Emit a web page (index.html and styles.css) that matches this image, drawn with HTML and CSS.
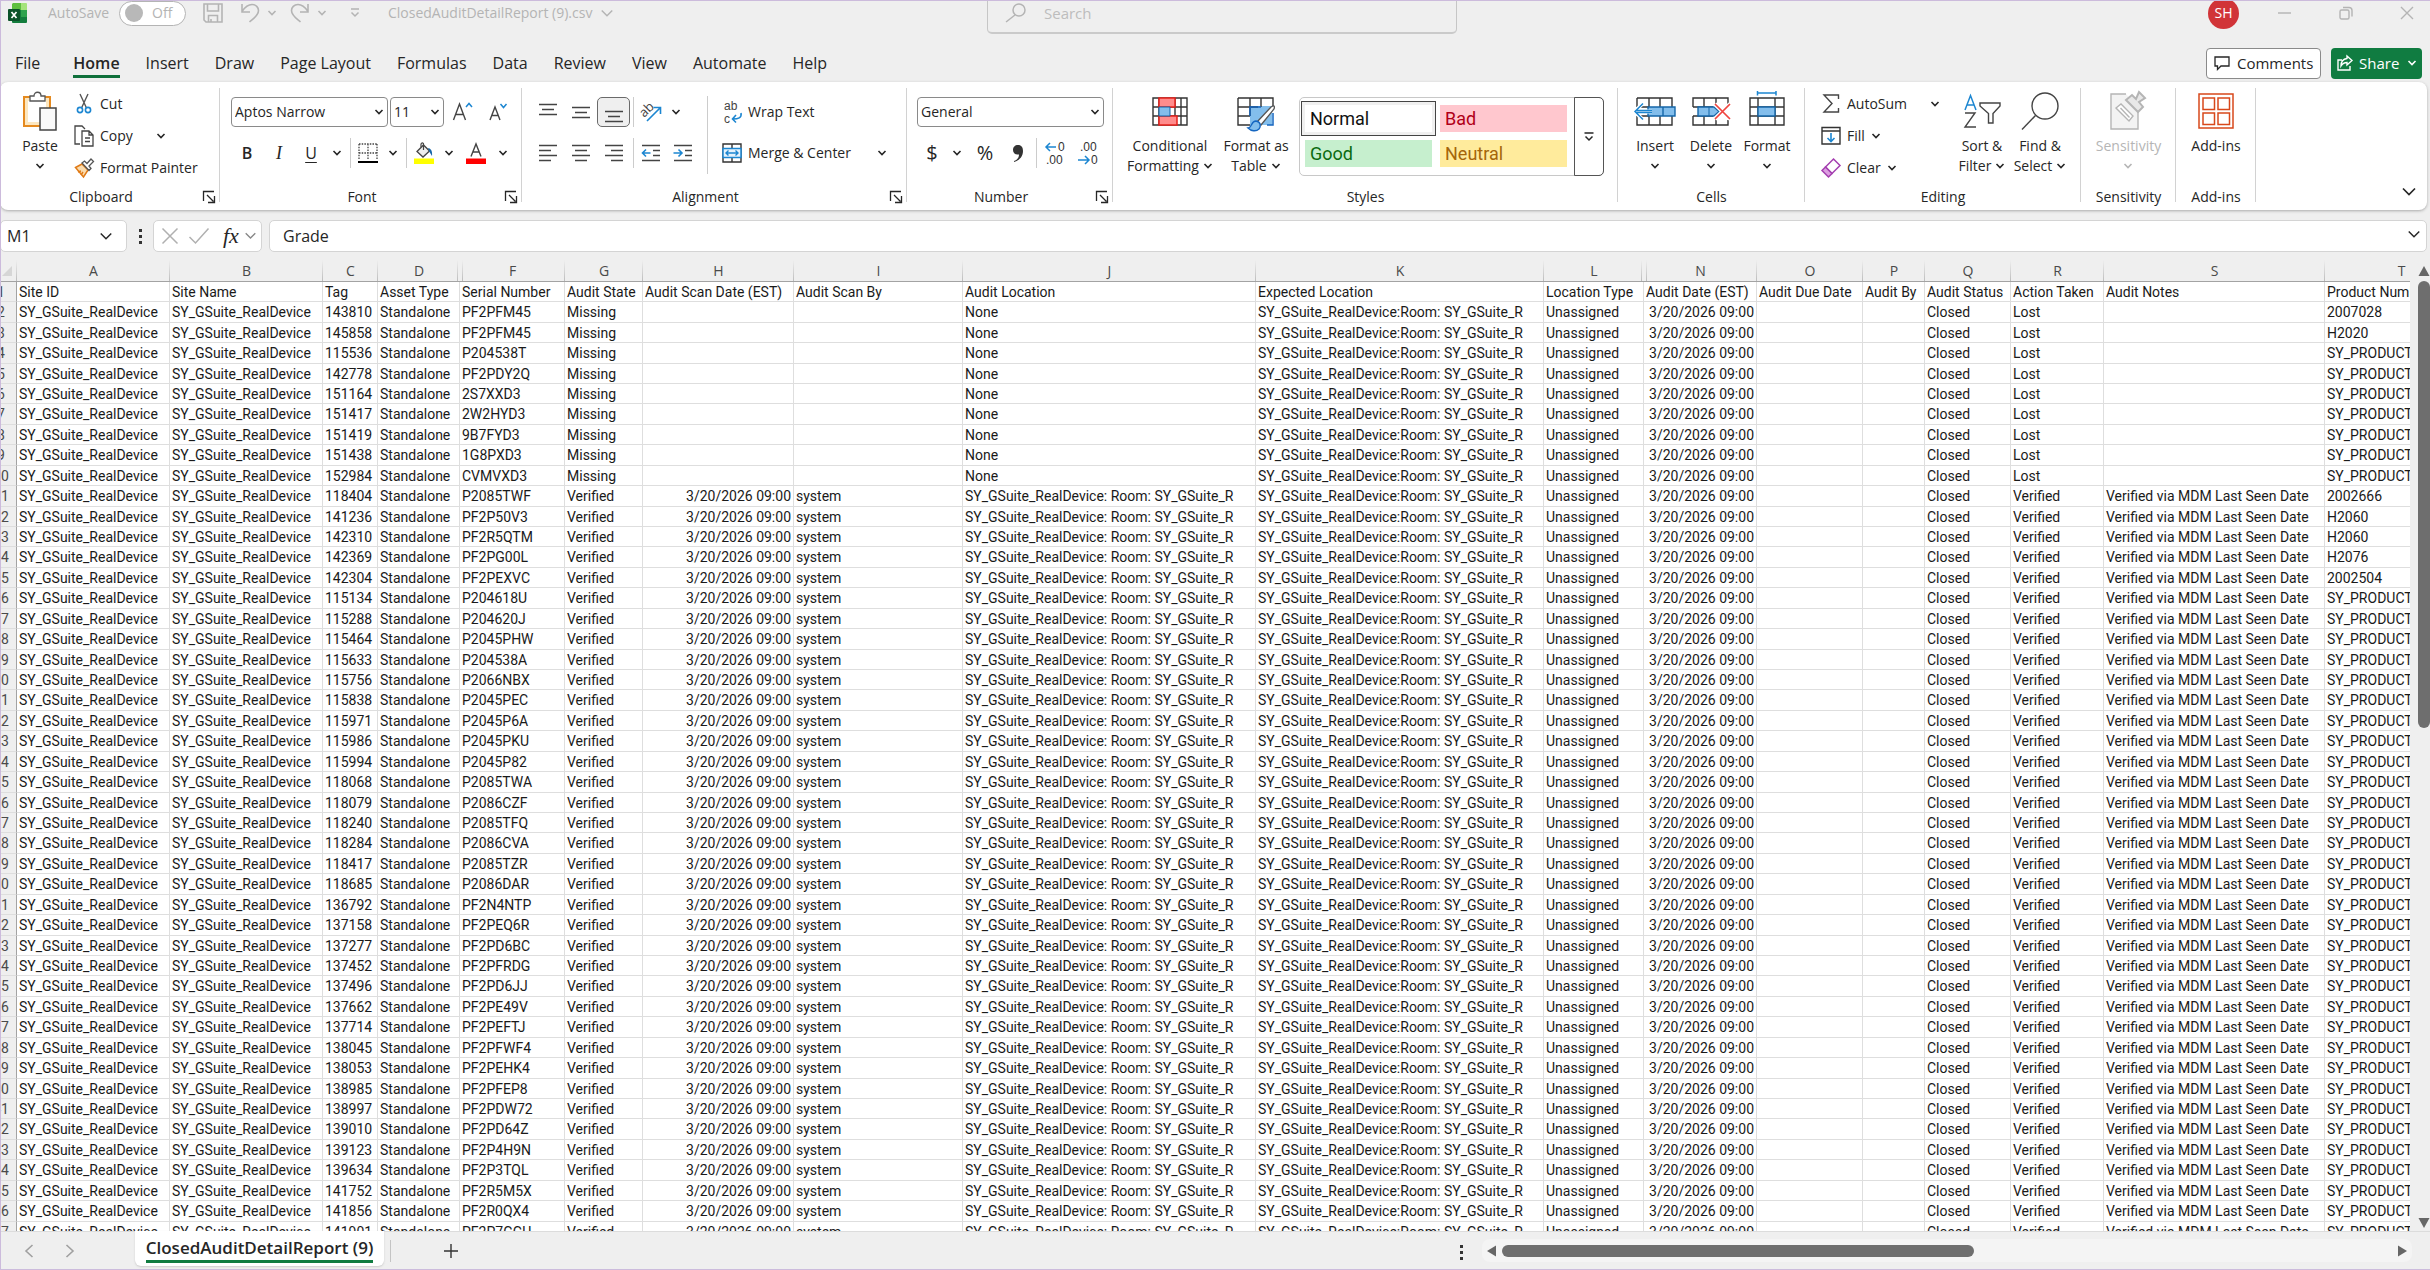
FILE: index.html
```html
<!DOCTYPE html>
<html lang="en">
<head>
<meta charset="utf-8">
<title>ClosedAuditDetailReport (9).csv</title>
<link rel="stylesheet" href="styles.css">
</head>
<body>
<svg class="sprite" aria-hidden="true">
  <symbol id="chev" viewBox="0 0 10 6"><path d="M1.500 1l3.500 3.500L8.500 1" fill="none" stroke="currentColor" stroke-width="1.600"/></symbol>
  <symbol id="chev-lg" viewBox="0 0 16 10"><path d="M2 1.500l6 6 6-6" fill="none" stroke="currentColor" stroke-width="1.700"/></symbol>
  <symbol id="launch" viewBox="0 0 14 14"><path d="M1.500 11V1.500H12M5 5l6.500 6.500M12.500 6v6.500H6" fill="none" stroke="currentColor" stroke-width="1.300"/></symbol>
</svg>

<header class="titlebar">
  <div class="title-left">
    <svg class="app-icon" width="20" height="22" viewBox="0 0 20 22"><path d="M5 1h8v7H4V2z" fill="#5ebf3f"/><path d="M13 1h5a1 1 0 0 1 1 1v6h-6z" fill="#a5e37b"/><path d="M4 8h15v12a1 1 0 0 1-1 1H5a1 1 0 0 1-1-1z" fill="#137d3d"/><path d="M13 8h6v7h-6z" fill="#2fa34e"/><rect y="7" width="12" height="12" rx="1" fill="#0b5229"/><path d="M3.500 10l5 6M8.500 10l-5 6" stroke="#fff" stroke-width="1.700"/></svg>
    <label class="autosave" for="autosave">AutoSave</label>
    <span class="toggle"><input type="checkbox" id="autosave"><span class="toggle-text">Off</span></span>
    <button class="tb save" aria-label="Save"><svg width="20" height="20" viewBox="0 0 20 20" fill="none" stroke="currentColor" stroke-width="1.600"><path d="M1 1h18v18H3l-2-2zM4.500 1v7h11V1M5.500 19v-6.500h9V19M8 16v3"/></svg></button>
    <button class="tb" aria-label="Undo"><svg width="20" height="20" viewBox="0 0 20 20" fill="none" stroke="currentColor" stroke-width="1.600"><path d="M2 1v8h8M2 8.500C5 4 8 1.500 12 1.500c4 0 6.500 3 6.500 6 0 5-5 8-9 11.500"/></svg></button>
    <svg class="c" width="10" height="6"><use href="#chev"/></svg>
    <button class="tb redo" aria-label="Redo"><svg width="20" height="20" viewBox="0 0 20 20" fill="none" stroke="currentColor" stroke-width="1.600"><path d="M18 1v8h-8M18 8.500C15 4 12 1.500 8 1.500c-4 0-6.500 3-6.500 6 0 5 5 8 9 11.500"/></svg></button>
    <svg class="c" width="10" height="6"><use href="#chev"/></svg>
    <button class="tb more" aria-label="Customize toolbar"><svg width="10" height="10" viewBox="0 0 10 10" fill="none" stroke="currentColor" stroke-width="1.500"><path d="M1 1h8M1.500 4.500L5 8l3.500-3.500"/></svg></button>
    <button class="filename">ClosedAuditDetailReport (9).csv <svg width="14" height="9"><use href="#chev-lg"/></svg></button>
  </div>
  <label class="search">
    <svg width="24" height="20" viewBox="0 0 24 20" fill="none" stroke="currentColor" stroke-width="1.500"><circle cx="15" cy="7" r="6"/><path d="M11 12l-9 7"/></svg>
    <input type="text" placeholder="Search" aria-label="Search">
  </label>
  <div class="title-right">
    <button class="avatar">SH</button>
    <button class="win" aria-label="Minimize"><svg width="14" height="14" fill="none" stroke="currentColor" stroke-width="1.400"><path d="M0 7h13"/></svg></button>
    <button class="win" aria-label="Restore"><svg width="14" height="14" fill="none" stroke="currentColor" stroke-width="1.400"><rect x="1" y="4" width="9" height="9" rx="1.500"/><path d="M4 1.500h6a3 3 0 0 1 3 3v6"/></svg></button>
    <button class="win" aria-label="Close"><svg width="14" height="14" fill="none" stroke="currentColor" stroke-width="1.400"><path d="M1 1l12 12M13 1L1 13"/></svg></button>
  </div>
</header>

<nav class="tabs">
  <a class="file" href="#">File</a><a class="active" href="#">Home</a><a href="#">Insert</a><a href="#">Draw</a><a href="#">Page Layout</a><a href="#">Formulas</a><a href="#">Data</a><a href="#">Review</a><a href="#">View</a><a href="#">Automate</a><a href="#">Help</a>
  <div class="tab-actions">
    <button class="comments"><svg width="16" height="15" viewBox="0 0 16 15" fill="none" stroke="currentColor" stroke-width="1.300"><path d="M1 1h14v9H7l-3.500 3.500V10H1z"/></svg>Comments</button>
    <button class="share"><svg width="16" height="16" viewBox="0 0 16 16" fill="none" stroke="currentColor" stroke-width="1.400"><path d="M5 5H1v10h12v-4M10 1l5 4.500L10 10V7.500c-3 0-4.500 1-6 3.500 0-4 2-7 6-7.500z"/></svg>Share<svg width="10" height="6"><use href="#chev"/></svg></button>
  </div>
</nav>

<section class="ribbon">
  <div class="group clipboard">
    <div class="body">
      <button class="big"><span class="ic"><svg width="36" height="40" viewBox="0 0 36 40"><path d="M2 6h26v29H2z" fill="#fce7c0" stroke="#e58a1f" stroke-width="2"/><path d="M6 10h18v21H6z" fill="#fff"/><path d="M8 10V5h4c0-5 7-5 7 0h4v5z" fill="#fff" stroke="#555" stroke-width="1.300"/><path d="M18 17h16v22H18z" fill="#fafafa" stroke="#444" stroke-width="1.500"/></svg></span>Paste<span class="l2"><svg width="10" height="6"><use href="#chev"/></svg></span></button>
      <div class="stack">
        <button class="small"><svg width="20" height="22" viewBox="0 0 20 22" fill="none"><path d="M6 1l6.500 14M14 1L7.500 15" stroke="#555" stroke-width="1.400"/><circle cx="6" cy="17" r="2.600" stroke="#1c86d1" stroke-width="1.600"/><circle cx="14" cy="17" r="2.600" stroke="#1c86d1" stroke-width="1.600"/></svg>Cut</button>
        <button class="small copy"><svg width="20" height="22" viewBox="0 0 20 22" fill="none" stroke="#444" stroke-width="1.300"><path d="M6 19H1V1h7l3 3"/><path d="M8 6h7l4 4v11H8zM15 6v4h4M11 13h5M11 16.500h5"/></svg>Copy<svg class="end" width="10" height="6"><use href="#chev"/></svg></button>
        <button class="small"><svg width="20" height="20" viewBox="0 0 20 20"><path d="M1.500 9.500L8 6l6 6-4.500 7z" fill="#fbdcae" stroke="#e07a16" stroke-width="1.500"/><path d="M4 14l3-1M7 17l2-3" stroke="#e07a16" stroke-width="1.400"/><path d="M8 5l2.500-2 2.500 2.500L17 1l2.500 2.500L15 8l2 2.500-2 2z" fill="#fff" stroke="#555" stroke-width="1.300"/></svg>Format Painter</button>
      </div>
    </div>
    <footer><span>Clipboard</span><button aria-label="Clipboard settings"><svg width="14" height="14"><use href="#launch"/></svg></button></footer>
  </div>

  <div class="group font">
    <div class="body"><div class="rows">
      <div class="row">
        <span class="combo w-font"><select aria-label="Font"><option>Aptos Narrow</option></select><svg width="10" height="6"><use href="#chev"/></svg></span>
        <span class="combo w-size"><select aria-label="Font size"><option>11</option></select><svg width="10" height="6"><use href="#chev"/></svg></span>
        <button class="t w34" aria-label="Increase font size"><svg width="22" height="22" viewBox="0 0 22 22" fill="none"><path d="M1.500 19L7.500 3l6 16M3.500 13.500h8" stroke="#444" stroke-width="1.400"/><path d="M14 6l3-3.500L20 6" stroke="#1c86d1" stroke-width="1.500"/></svg></button>
        <button class="t w32" aria-label="Decrease font size"><svg width="20" height="22" viewBox="0 0 20 22" fill="none"><path d="M2 19L7 6l5 13M4 14.500h6" stroke="#444" stroke-width="1.400"/><path d="M12.500 3l3 3.500L18.500 3" stroke="#1c86d1" stroke-width="1.500"/></svg></button>
      </div>
      <div class="row r2">
        <button class="t w32 b">B</button><button class="t w32 i">I</button><button class="t w32 u">U</button><button class="t w20" aria-label="Underline options"><svg width="10" height="6"><use href="#chev"/></svg></button>
        <i class="sep"></i>
        <button class="t w30" aria-label="Borders"><svg width="20" height="20" viewBox="0 0 20 20" fill="none" stroke="#444" stroke-width="1.300"><path d="M1 1h18M1 10h18M1 1v16M10 1v16M19 1v16" stroke-dasharray="1.500 1.200"/><path d="M0 19h20" stroke="#000" stroke-width="2"/></svg></button><button class="t w20" aria-label="Border options"><svg width="10" height="6"><use href="#chev"/></svg></button>
        <i class="sep"></i>
        <button class="t w30" aria-label="Fill color"><svg width="20" height="22" viewBox="0 0 20 22" fill="none"><path d="M3 9.500L9.500 3l6 6L9 15z" fill="#eee" stroke="#444" stroke-width="1.300"/><path d="M9.500 8V2c0-1.500-2.500-1.500-2.500.5V5" stroke="#444" stroke-width="1.200"/><path d="M14 6c3 .5 4.500 3 4 8l-2.500-4z" fill="#1566a8"/><path d="M0 16.500h20V22H0z" fill="#ff0"/></svg></button><button class="t w20" aria-label="Fill options"><svg width="10" height="6"><use href="#chev"/></svg></button>
        <button class="t w34" aria-label="Font color"><svg width="20" height="22" viewBox="0 0 20 22" fill="none"><path d="M5 14.500L10 2l5 12.500M7 10h6" stroke="#444" stroke-width="1.400"/><path d="M0 16.500h20V22H0z" fill="#f00"/></svg></button><button class="t w20" aria-label="Font color options"><svg width="10" height="6"><use href="#chev"/></svg></button>
      </div>
    </div></div>
    <footer><span>Font</span><button aria-label="Font settings"><svg width="14" height="14"><use href="#launch"/></svg></button></footer>
  </div>

  <div class="group align">
    <div class="body">
      <div class="rows">
        <div class="row">
          <button class="t w33" aria-label="Top align"><svg class="ln" width="20" height="22"><path d="M1 3.500h18M4 8.500h12M1 13.500h18"/></svg></button>
          <button class="t w33" aria-label="Middle align"><svg class="ln" width="20" height="22"><path d="M1 6.500h18M4 11.500h12M1 16.500h18"/></svg></button>
          <button class="t w33 on" aria-label="Bottom align"><svg class="ln" width="20" height="22"><path d="M1 10.500h18M4 15.500h12M1 20.500h18"/></svg></button>
          <i class="sep"></i>
          <button class="t w30" aria-label="Orientation"><svg width="22" height="22" viewBox="0 0 22 22" fill="none"><text x="0" y="13" transform="rotate(-45 7 10)" class="ab">ab</text><path d="M7 20L20 7M13.500 6.500H20.500V13" stroke="#1c86d1" stroke-width="1.600"/></svg></button><button class="t w20" aria-label="Orientation options"><svg width="10" height="6"><use href="#chev"/></svg></button>
        </div>
        <div class="row r2">
          <button class="t w33" aria-label="Align left"><svg class="ln" width="20" height="22"><path d="M1 3.500h18M1 8.500h12M1 13.500h18M1 18.500h12"/></svg></button>
          <button class="t w33" aria-label="Center"><svg class="ln" width="20" height="22"><path d="M1 3.500h18M4 8.500h12M1 13.500h18M4 18.500h12"/></svg></button>
          <button class="t w33" aria-label="Align right"><svg class="ln" width="20" height="22"><path d="M1 3.500h18M7 8.500h12M1 13.500h18M7 18.500h12"/></svg></button>
          <i class="sep"></i>
          <button class="t w30" aria-label="Decrease indent"><svg class="ln" width="20" height="22"><path d="M1 3.500h18M12 8.500h7M12 13.500h7M1 18.500h18"/><path d="M9.500 11H2M5 7.500L1.500 11 5 14.500" class="bl"/></svg></button>
          <button class="t w34" aria-label="Increase indent"><svg class="ln" width="20" height="22"><path d="M1 3.500h18M12 8.500h7M12 13.500h7M1 18.500h18"/><path d="M.5 11H8M5.500 7.500L9 11l-3.500 3.500" class="bl"/></svg></button>
        </div>
      </div>
      <i class="vsep"></i>
      <div class="rows">
        <div class="row"><button class="small"><svg width="20" height="24" viewBox="0 0 20 24" fill="none"><text x="2" y="10" class="wr">ab</text><text x="2" y="23" class="wr">c</text><path d="M19 13c1 5-3 6-8 6M14 15l-3.500 4 3.500 3.500" stroke="#1c86d1" stroke-width="1.600"/></svg>Wrap Text</button></div>
        <div class="row r2"><button class="small merge"><svg width="20" height="20" viewBox="0 0 20 20" fill="none"><path d="M1 1h18v18H1zM10 1v4M10 15v4" stroke="#333" stroke-width="1.400"/><path d="M1 5.500h18v9H1z" fill="#e5f2fc" stroke="#1c86d1" stroke-width="1.500"/><path d="M4 10h12M6.500 7.500L4 10l2.500 2.500M13.500 7.500L16 10l-2.500 2.500" stroke="#1c86d1" stroke-width="1.400"/></svg>Merge &amp; Center<svg class="end" width="10" height="6"><use href="#chev"/></svg></button></div>
      </div>
    </div>
    <footer><span>Alignment</span><button aria-label="Alignment settings"><svg width="14" height="14"><use href="#launch"/></svg></button></footer>
  </div>

  <div class="group number">
    <div class="body"><div class="rows">
      <div class="row"><span class="combo w-num"><select aria-label="Number format"><option>General</option></select><svg width="10" height="6"><use href="#chev"/></svg></span></div>
      <div class="row r2">
        <button class="t w30 sym">$</button><button class="t w20" aria-label="Currency options"><svg width="10" height="6"><use href="#chev"/></svg></button><button class="t w36 sym">%</button>
        <button class="t w30" aria-label="Comma style"><svg width="12" height="18" viewBox="0 0 12 18"><path d="M2 17c4-1.500 5-4 5-6.500C3 11 1 9 1 6c0-3 2-5 5-5 3.500 0 5 2.500 5 6 0 6-4 9.500-9 11z" fill="#333"/></svg></button>
        <i class="sep"></i>
        <button class="t w32" aria-label="Increase decimal"><svg width="22" height="24" viewBox="0 0 22 24" fill="none"><text x="14" y="10" class="dg">0</text><text x="2" y="23" class="dg">.00</text><path d="M12 6H2M6 2L2 6l4 4" stroke="#1c86d1" stroke-width="1.500"/></svg></button>
        <button class="t w34" aria-label="Decrease decimal"><svg width="22" height="24" viewBox="0 0 22 24" fill="none"><text x="3" y="10" class="dg">.00</text><text x="14" y="23" class="dg">0</text><path d="M1 19h11M8 15l4 4-4 4" stroke="#1c86d1" stroke-width="1.500"/></svg></button>
      </div>
    </div></div>
    <footer><span>Number</span><button aria-label="Number settings"><svg width="14" height="14"><use href="#launch"/></svg></button></footer>
  </div>

  <div class="group styles">
    <div class="body">
      <button class="big"><span class="ic"><svg width="36" height="40" viewBox="0 0 36 40" fill="none"><path d="M1 7h34v27H1zM1 16h34M1 25h34M7 7v27M29 7v27M23 7v27" stroke="#333" stroke-width="1.400"/><path d="M7 7h16v9H7zM7 25h18v9H7z" fill="#ff8c8c" stroke="#e8211b" stroke-width="1.500"/><path d="M7 16h11v9H7z" fill="#83beec" stroke="#1566a8"/></svg></span>Conditional<span class="l2">Formatting <svg width="10" height="6"><use href="#chev"/></svg></span></button>
      <button class="big"><span class="ic"><svg width="40" height="40" viewBox="0 0 40 40" fill="none"><path d="M14 15h22v19H14z" fill="#83beec"/><path d="M2 7h35v9M2 7v27h12M2 16h20M2 25h12M14 7v18M25 7v9" stroke="#333" stroke-width="1.400"/><path d="M37 22v12h-6M14 25v-9h11" stroke="#1566c0" stroke-width="1.500"/><path d="M21 31l14-15c3-2 4-1 3 2L25 34z" fill="#fff" stroke="#555" stroke-width="1.300"/><path d="M12 37c4 0 3-7 8-7 5 1 5 5 3 8-3 3-8 2-11-1z" fill="#83beec" stroke="#1566c0" stroke-width="1.400"/></svg></span>Format as<span class="l2">Table <svg width="10" height="6"><use href="#chev"/></svg></span></button>
      <div class="gallery">
        <div class="swatches">
          <button class="sw normal">Normal</button><button class="sw bad">Bad</button><button class="sw good">Good</button><button class="sw neutral">Neutral</button>
        </div>
        <button class="gmore" aria-label="More styles"><svg width="10" height="10" viewBox="0 0 10 10" fill="none" stroke="currentColor" stroke-width="1.500"><path d="M.5 1h9M1.500 4.500L5 8l3.500-3.500"/></svg></button>
      </div>
    </div>
    <footer><span>Styles</span></footer>
  </div>

  <div class="group cells">
    <div class="body">
      <button class="big"><span class="ic"><svg width="42" height="40" viewBox="0 0 42 40" fill="none"><path d="M3 7h35v9M3 16V7M3 25v9h35v-9M15 7v9M26 7v9M15 25v9M26 25v9M3 16h12M3 25h12" stroke="#333" stroke-width="1.400"/><path d="M14 16h27v9H14z" fill="#83beec" stroke="#1566a8" stroke-width="1.400"/><path d="M29 16v9" stroke="#1566a8" stroke-width="1.400"/><path d="M1 20.500h17M9 12l-8 8.500L9 29" stroke="#fff" stroke-width="4"/><path d="M2 19.500h16M2 21.500h16M9 12.500l-8 8 8 8" stroke="#1c86d1" stroke-width="1.500"/></svg></span>Insert<span class="l2"><svg width="10" height="6"><use href="#chev"/></svg></span></button>
      <button class="big"><span class="ic"><svg width="40" height="40" viewBox="0 0 40 40" fill="none"><path d="M2 16V7h35v6M2 25v9h35v-5M13 7v9M25 7v7M13 25v9M25 28v6M2 16h20M2 25h20" stroke="#333" stroke-width="1.400"/><path d="M7 16h16l5 4.500-5 4.500H7z" fill="#83beec" stroke="#1566a8" stroke-width="1.400"/><path d="M18 16v9" stroke="#1566a8"/><path d="M24 13l15 15M39 13L24 28" stroke="#fff" stroke-width="4"/><path d="M24 13l15 15M39 13L24 28" stroke="#f0443e" stroke-width="1.700"/></svg></span>Delete<span class="l2"><svg width="10" height="6"><use href="#chev"/></svg></span></button>
      <button class="big"><span class="ic"><svg width="38" height="40" viewBox="0 0 38 40" fill="none"><path d="M2 7h34v27H2zM2 16h34M2 25h34M10 7v27M27 7v27" stroke="#333" stroke-width="1.400"/><path d="M10 16h17v9H10z" fill="#83beec" stroke="#1566a8" stroke-width="1.400"/><path d="M9 2h19M9.500 0v4.500M28 0v4.500" stroke="#1c86d1" stroke-width="1.500"/></svg></span>Format<span class="l2"><svg width="10" height="6"><use href="#chev"/></svg></span></button>
    </div>
    <footer><span>Cells</span></footer>
  </div>

  <div class="group editing">
    <div class="body">
      <div class="stack">
        <button class="small sum"><svg width="20" height="20" viewBox="0 0 20 20" fill="none" stroke="#444" stroke-width="1.400"><path d="M17.500 5V1H3l8 8.500L3 18h14.500v-4"/></svg>AutoSum<svg class="end" width="10" height="6"><use href="#chev"/></svg></button>
        <button class="small"><svg width="20" height="20" viewBox="0 0 20 20" fill="none" stroke="#333" stroke-width="1.400"><path d="M1 1.500h18v16.500H1zM1 5h18"/><path d="M10 7v8.500M6.500 12l3.500 3.500 3.500-3.500" stroke="#1c86d1" stroke-width="1.600"/></svg>Fill<svg width="10" height="6"><use href="#chev"/></svg></button>
        <button class="small"><svg width="20" height="20" viewBox="0 0 20 20" fill="none" stroke="#a43fb0" stroke-width="1.500"><path d="M12.500 1l6.500 6.500-8 8L4.500 9z"/><path d="M4.500 9l6.500 6.500-3.500 3.500L1 12.500z" fill="#dc9fe0"/></svg>Clear<svg width="10" height="6"><use href="#chev"/></svg></button>
      </div>
      <button class="big sort"><span class="ic"><svg width="38" height="40" viewBox="0 0 38 40" fill="none"><path d="M2 19L7.500 4.500 13 19M4 14h7" stroke="#1c86d1" stroke-width="1.500"/><path d="M2 22h10L2 36h11" stroke="#444" stroke-width="1.400"/><path d="M17 12h20v3l-7 7.500V32h-4.500v-9.500L17 15z" stroke="#444" stroke-width="1.400"/></svg></span>Sort &amp;<span class="l2">Filter <svg width="10" height="6"><use href="#chev"/></svg></span></button>
      <button class="big sort"><span class="ic"><svg width="38" height="40" viewBox="0 0 38 40" fill="none" stroke="#444" stroke-width="1.400"><circle cx="24" cy="15" r="13"/><path d="M14.500 24.500L1 38.500"/></svg></span>Find &amp;<span class="l2">Select <svg width="10" height="6"><use href="#chev"/></svg></span></button>
    </div>
    <footer><span>Editing</span></footer>
  </div>

  <div class="group sens">
    <div class="body">
      <button class="big" disabled><span class="ic"><svg width="36" height="40" viewBox="0 0 36 40" stroke="#b5b5b5" stroke-width="1.400"><path d="M1 3h15l12 13v22H1z" fill="#f3f3f3" stroke="none"/><path d="M16 3H1v35h27V20" fill="none"/><path d="M6 17l5-4 12 12-4 5z" fill="#fff"/><path d="M10.500 17l9 9.500" fill="none"/><path d="M16 9l6-5 4 4 3-7 6 6-6 4 4 5-5 5z" fill="#e8e8e8" stroke-width="2"/></svg></span>Sensitivity<span class="l2"><svg width="10" height="6"><use href="#chev"/></svg></span></button>
    </div>
    <footer><span>Sensitivity</span></footer>
  </div>

  <div class="group addins">
    <div class="body">
      <button class="big"><span class="ic"><svg width="36" height="40" viewBox="0 0 36 40" fill="none" stroke="#d8481b" stroke-width="1.500"><path d="M1 3h34v34H1zM5 7h11.500v11.500H5zM20 7h11.500v11.500H20zM5 22h11.500v11.500H5zM20 22h11.500v11.500H20z"/></svg></span>Add-ins</button>
    </div>
    <footer><span>Add-ins</span></footer>
  </div>
  <button class="collapse" aria-label="Collapse ribbon"><svg width="16" height="10"><use href="#chev-lg"/></svg></button>
</section>

<section class="formula">
  <span class="namebox"><input type="text" value="M1" aria-label="Name box"><svg width="14" height="9"><use href="#chev-lg"/></svg></span>
  <span class="dots"><i></i><i></i><i></i></span>
  <span class="fxbox">
    <button aria-label="Cancel"><svg width="18" height="18" fill="none" stroke="#b0b0b0" stroke-width="1.500"><path d="M1.500 1.500l15 15M16.500 1.500l-15 15"/></svg></button>
    <button aria-label="Enter"><svg width="22" height="18" fill="none" stroke="#b0b0b0" stroke-width="1.500"><path d="M1.500 10l6 6L20.500 1.500"/></svg></button>
    <button class="fx">fx</button>
    <svg class="fxc" width="13" height="8"><use href="#chev-lg"/></svg>
  </span>
  <span class="entry"><input type="text" value="Grade" aria-label="Formula bar"><svg width="14" height="9"><use href="#chev-lg"/></svg></span>
</section>

<main class="work">
  <div class="sheet">
    <table>
      <colgroup id="cols"></colgroup>
      <thead><tr id="letters"></tr></thead>
      <tbody id="grid"></tbody>
    </table>
  </div>
  <div class="vscroll">
    <svg width="12" height="10"><path d="M6 0l5.500 10H.5z" fill="#666"/></svg>
    <div class="vtrack"><div class="vthumb"></div></div>
    <svg width="12" height="10"><path d="M6 10l5.500-10H.5z" fill="#666"/></svg>
  </div>
</main>

<footer class="bottom">
  <button class="nav" aria-label="Previous sheet"><svg width="10" height="14" fill="none" stroke="#a0a0a0" stroke-width="1.600"><path d="M8.500 1l-6.500 6 6.500 6"/></svg></button>
  <button class="nav" aria-label="Next sheet"><svg width="10" height="14" fill="none" stroke="#a0a0a0" stroke-width="1.600"><path d="M1.500 1L8 7l-6.500 6"/></svg></button>
  <button class="sheet-tab"><span>ClosedAuditDetailReport (9)</span></button>
  <i class="tab-end"></i>
  <button class="add" aria-label="New sheet"><svg width="16" height="16" fill="none" stroke="#333" stroke-width="1.400"><path d="M8 1v14M1 8h14"/></svg></button>
  <span class="dots"><i></i><i></i><i></i></span>
  <div class="hscroll">
    <svg width="9" height="12"><path d="M0 6l9-5.500v11z" fill="#666"/></svg>
    <div class="htrack"><div class="hthumb"></div></div>
    <svg width="9" height="12"><path d="M9 6L0 .5v11z" fill="#666"/></svg>
  </div>
</footer>
<script src="grid.js"></script>
</body>
</html>
```
FILE: styles.css
```css
* { box-sizing: border-box; }
body {
  margin: 0;
  height: 100vh;
  display: flex;
  flex-direction: column;
  overflow: hidden;
  background: #efefef;
  color: #262626;
  font: 14px/20px "Open Sans", "Noto Sans", sans-serif;
}
body::after {
  content: "";
  position: absolute;
  inset: 0;
  border: 1px solid #ccbbdc;
  border-right: 0;
  pointer-events: none;
}
button, input, select { font: inherit; color: inherit; background: none; border: 0; padding: 0; margin: 0; outline: 0; }
button { display: flex; align-items: center; white-space: nowrap; }
svg { flex: none; display: block; overflow: visible; }
.sprite { position: absolute; width: 0; height: 0; }

/* title bar */
.titlebar {
  display: grid;
  grid-template-columns: 1fr 470px 1fr;
  grid-template-rows: 26px;
  align-items: center;
  height: 26px;
  margin-bottom: 20px;
  padding-left: 14px;
  color: #b4b4b4;
}
.title-left { display: flex; align-items: center; margin-left: -6px; }
.app-icon { margin-right: 20px; }
.autosave { width: 71px; }
.toggle { display: grid; align-items: center; width: 67px; height: 25px; margin-right: 17px; }
.toggle > * { grid-area: 1 / 1; }
.toggle input { appearance: none; width: 67px; height: 25px; border: 1px solid #b4b4b4; border-radius: 13px; background: #fff; }
.toggle input::before { content: ""; display: block; width: 18px; height: 18px; margin: 2px 5px; border-radius: 50%; background: #b8b8b8; }
.toggle-text { padding-left: 33px; pointer-events: none; }
.tb.save { margin-right: 17px; }
.c { margin: 0 13px 0 7px; }
.tb.more { margin: 0 28px 0 10px; }
.filename { gap: 8px; }
.search {
  display: flex;
  align-items: center;
  gap: 16px;
  height: 42px;
  padding-left: 16px;
  border: 1px solid #c6c6c6;
  border-bottom: 2px solid #cacaca;
  border-radius: 5px;
  font-size: 15px;
}
.search input { flex: 1; }
.search input::placeholder { color: #bdbdbd; }
.title-right { display: flex; justify-content: flex-end; align-items: center; gap: 47px; padding-right: 16px; }
.avatar { width: 31px; height: 31px; justify-content: center; border-radius: 50%; background: #d13438; color: #fff; margin-right: -8px; }

/* ribbon tabs */
.tabs { display: flex; align-items: center; gap: 26px; height: 36px; padding: 0 8px 2px 15px; font-size: 16px; }
.tabs a { color: inherit; text-decoration: none; line-height: 24px; padding: 3px 0 0; border-bottom: 3px solid transparent; }
.tabs .file { margin-right: 7px; }
.tabs a.active { font-weight: 600; border-color: #0f703b; }
.tab-actions { display: flex; gap: 10px; margin-left: auto; }
.tab-actions button { height: 31px; border-radius: 4px; font-size: 15px; }
.comments { width: 115px; gap: 7px; padding-left: 7px; border: 1px solid #8a8a8a; background: #fff; }
.share { width: 91px; gap: 6px; padding-left: 6px; background: #107c41; color: #fff; }
.share svg:last-child { margin-left: 2px; }

/* ribbon */
.ribbon { display: flex; height: 128px; padding-top: 6px; margin-right: 3px; background: #fff; border-radius: 8px; box-shadow: 0 1px 3px #aaa; }
.group { display: flex; flex-direction: column; background: linear-gradient(#d2d2d2, #d2d2d2) right top / 1px 114px no-repeat; }
.clipboard { width: 220px; }
.font { width: 302px; }
.align { width: 385px; }
.number { width: 206px; }
.styles { width: 505px; }
.cells { width: 187px; }
.editing { width: 276px; }
.sens { width: 95px; }
.addins { width: 80px; }
.body { display: flex; height: 99px; }
.group footer { display: flex; align-items: center; height: 20px; }
.group footer span { flex: 1; text-align: center; }
.group footer button { width: 18px; }
.clipboard .body { padding-left: 17px; gap: 11px; }
.font .body { padding-left: 11px; }
.align .body { padding-left: 9px; }
.number .body { padding-left: 10px; }
.styles .body { padding-left: 14px; }
.cells .body { padding-left: 9px; }
.editing .body { padding-left: 16px; }
.sens .body, .addins .body { justify-content: center; }
.big { flex-direction: column; min-width: 46px; padding-top: 3px; }
.ic { height: 40px; margin-bottom: 5px; }
.l2 { display: flex; align-items: center; justify-content: center; gap: 4px; min-height: 20px; }
.styles .big { width: 86px; }
.cells .big { width: 56px; }
.big.sort { width: 58px; }
.editing .stack { width: 132px; }
.big:disabled { color: #b5b5b5; }
.stack { display: flex; flex-direction: column; }
.small { gap: 6px; height: 32px; }
.end { margin-left: auto; }
.copy { width: 92px; }
.sum { width: 119px; }
.merge { width: 165px; }
.rows { display: flex; flex-direction: column; gap: 11px; padding-top: 9px; }
.row { display: flex; height: 30px; align-items: center; }
.font .row:first-child { gap: 2px; }
.combo { display: grid; align-items: center; height: 30px; border: 1px solid #8a8a8a; border-radius: 4px; }
.combo > * { grid-area: 1 / 1; }
.combo select { appearance: none; width: 100%; height: 28px; padding-left: 3px; }
.combo svg { justify-self: end; margin-right: 3px; pointer-events: none; }
.w-font { width: 157px; }
.w-size { width: 54px; }
.w-num { width: 187px; }
.t { justify-content: center; height: 30px; }
.w20 { width: 20px; }
.w30 { width: 30px; }
.w32 { width: 32px; }
.w33 { width: 33px; }
.w34 { width: 34px; }
.w36 { width: 36px; }
.t.on { border: 1px solid #6a6a6a; border-radius: 5px; background: #efefef; }
.b { font-weight: 600; font-size: 16px; }
.i { font: italic 18px "Liberation Serif", serif; }
.u { font-size: 16px; text-decoration: underline; text-underline-offset: 3px; }
.sym { font-size: 20px; }
.sep { width: 6px; height: 30px; background: linear-gradient(#ccc, #ccc) center / 1px 100% no-repeat; }
.vsep { width: 14px; height: 78px; margin: 8px 8px 0 0; background: linear-gradient(#ccc, #ccc) center / 1px 100% no-repeat; }
.ln { fill: none; stroke: #444; stroke-width: 1.4; }
.bl { stroke: #1c86d1; stroke-width: 1.6; }
.ab { font: 13px "Open Sans", sans-serif; fill: #444; }
.wr { font: 12px "Liberation Sans", sans-serif; fill: #444; }
.dg { font: 12px "Liberation Sans", sans-serif; fill: #333; }
.gallery { display: flex; width: 305px; height: 79px; margin-top: 9px; border: 1px solid #c8c8c8; border-radius: 5px; }
.swatches { flex: 1; display: grid; grid-template-columns: 135px 135px; grid-template-rows: 35px 35px; padding: 3px 1px; }
.sw { margin: 4px; padding-left: 5px; font: 18px/28px "Roboto", sans-serif; }
.normal { margin: 0; padding-left: 8px; border: 1px solid #444; box-shadow: inset 0 0 0 3px #f0f0f0; color: #111; }
.bad { background: #ffc7ce; color: #b00018; }
.good { background: #c6efce; color: #0b6b10; }
.neutral { background: #ffeb9c; color: #a5650a; }
.gmore { width: 30px; margin: -1px; justify-content: center; border: 1px solid #555; border-radius: 0 5px 5px 0; }
.collapse { margin-left: auto; align-self: flex-start; padding: 99px 10px 0 0; }

/* formula bar */
.formula { display: flex; align-items: center; height: 32px; margin: 10px 3px 8px 0; font-size: 16px; }
.formula input { flex: 1; min-width: 0; }
.namebox, .fxbox, .entry { display: flex; align-items: center; height: 32px; background: #fff; border: 1px solid #d4d4d4; border-radius: 5px; }
.namebox { width: 127px; padding: 0 13px 0 6px; }
.dots { display: flex; flex-direction: column; gap: 3px; width: 26px; align-items: center; }
.dots i { width: 3px; height: 3px; background: #333; }
.fxbox { width: 109px; padding: 0 3px 0 7px; gap: 9px; }
.fx { font: italic 22px/24px "Liberation Serif", serif; margin-left: 4px; }
.fxc { color: #888; margin-left: -4px; }
.entry { flex: 1; margin-left: 7px; padding: 0 5px 0 13px; }
.entry svg { margin-bottom: 4px; }

/* sheet */
.work { flex: 1; min-height: 0; display: flex; }
.sheet { flex: 1; min-width: 0; overflow: hidden; }
table { table-layout: fixed; border-spacing: 0; width: 0; margin-left: -14px; }
.c-row { width: 31px; }
thead th {
  height: 22px;
  padding: 0;
  font-weight: 400;
  line-height: 16px;
  color: #4a4a4a;
  border-bottom: 1px solid #a3a3a3;
  background: linear-gradient(#efefef, #bdbdbd) right top / 1px 100% no-repeat;
}
thead th.before-hidden { background-position: right 2px top; }
thead th.after-hidden { background-position: left 2px top, right top; background-image: linear-gradient(#efefef, #bdbdbd), linear-gradient(#efefef, #bdbdbd); }
.corner svg { margin-left: 15px; }
td, tbody th {
  height: 20px;
  padding: 0 2px;
  overflow: hidden;
  white-space: nowrap;
  border: solid #dedede;
  border-width: 0 1px 1px 0;
  background: #fff;
  color: #1a1a1a;
  font: 14px/18px "Roboto", sans-serif;
}
tbody th { padding: 0; background: #efefef; color: #4a4a4a; text-align: center; border-right-color: #a3a3a3; }
tr.tall > * { height: 21px; }
td.r { text-align: right; }
.vscroll { display: flex; flex-direction: column; align-items: flex-end; gap: 5px; width: 20px; padding: 6px 0 3px; }
.vtrack { flex: 1; width: 12px; }
.vthumb { height: 48%; border-radius: 6px; background: #6e6e6e; }

/* sheet tabs */
.bottom { display: flex; height: 39px; border-top: 1px solid #dcdcdc; align-items: flex-start; }
.bottom > * { flex: none; }
.nav { width: 41px; height: 38px; justify-content: center; }
.nav:first-child { margin-left: 8px; }
.sheet-tab { width: 249px; height: 35px; margin: -1px 0 0 45px; padding: 0 11px; justify-content: center; background: #fff; border-radius: 0 0 6px 6px; box-shadow: 0 1px 2px #ccc; font-weight: 600; font-size: 17px; }
.sheet-tab span { line-height: 25px; border-bottom: 3px solid #107c41; }
.tab-end { width: 1px; height: 22px; margin: 8px 52px 0 6px; background: #c4c4c4; }
.add { height: 38px; }
.bottom .dots { margin: 13px 8px 0 auto; }
.hscroll { display: flex; align-items: center; gap: 6px; width: 930px; height: 23px; margin: 7px 18px 0 0; padding: 0 5px; border-radius: 8px; background: #f4f4f4; }
.htrack { flex: 1; }
.hthumb { width: 53%; height: 12px; border-radius: 6px; background: #6e6e6e; }
```
FILE: grid.js
```js
const columns = [
  ["A", "Site ID", 153], ["B", "Site Name", 153], ["C", "Tag", 55], ["D", "Asset Type", 82],
  ["F", "Serial Number", 105], ["G", "Audit State", 78], ["H", "Audit Scan Date (EST)", 151],
  ["I", "Audit Scan By", 169], ["J", "Audit Location", 293], ["K", "Expected Location", 288],
  ["L", "Location Type", 100], ["N", "Audit Date (EST)", 113], ["O", "Audit Due Date", 106],
  ["P", "Audit By", 62], ["Q", "Audit Status", 86], ["R", "Action Taken", 93],
  ["S", "Audit Notes", 221], ["T", "Product Number", 153]
];

const missing = [
  ["143810", "PF2PFM45", "2007028"], ["145858", "PF2PFM45", "H2020"], ["115536", "P204538T"],
  ["142778", "PF2PDY2Q"], ["151164", "2S7XXD3"], ["151417", "2W2HYD3"], ["151419", "9B7FYD3"],
  ["151438", "1G8PXD3"], ["152984", "CVMVXD3"]
];

const verified = [
  ["118404", "P2085TWF", "2002666"], ["141236", "PF2P50V3", "H2060"], ["142310", "PF2R5QTM", "H2060"],
  ["142369", "PF2PG00L", "H2076"], ["142304", "PF2PEXVC", "2002504"], ["115134", "P204618U"],
  ["115288", "P204620J"], ["115464", "P2045PHW"], ["115633", "P204538A"], ["115756", "P2066NBX"],
  ["115838", "P2045PEC"], ["115971", "P2045P6A"], ["115986", "P2045PKU"], ["115994", "P2045P82"],
  ["118068", "P2085TWA"], ["118079", "P2086CZF"], ["118240", "P2085TFQ"], ["118284", "P2086CVA"],
  ["118417", "P2085TZR"], ["118685", "P2086DAR"], ["136792", "PF2N4NTP"], ["137158", "PF2PEQ6R"],
  ["137277", "PF2PD6BC"], ["137452", "PF2PFRDG"], ["137496", "PF2PD6JJ"], ["137662", "PF2PE49V"],
  ["137714", "PF2PEFTJ"], ["138045", "PF2PFWF4"], ["138053", "PF2PEHK4"], ["138985", "PF2PFEP8"],
  ["138997", "PF2PDW72"], ["139010", "PF2PD64Z"], ["139123", "PF2P4H9N"], ["139634", "PF2P3TQL"],
  ["141752", "PF2R5M5X"], ["141856", "PF2R0QX4"], ["141901", "PF2P7GGU"]
];

const site = "SY_GSuite_RealDevice";
const date = "3/20/2026 09:00";

function record([tag, serial, product], found) {
  return [
    site, site, tag, "Standalone", serial,
    found ? "Verified" : "Missing",
    found ? date : "", found ? "system" : "",
    found ? site + ": Room: SY_GSuite_R" : "None",
    site + ":Room: SY_GSuite_R", "Unassigned", date, "", "", "Closed",
    found ? "Verified" : "Lost",
    found ? "Verified via MDM Last Seen Date" : "",
    product || "SY_PRODUCT"
  ];
}

const rows = [
  columns.map(c => c[1]),
  ...missing.map(m => record(m, false)),
  ...verified.map(v => record(v, true))
];

document.getElementById("cols").innerHTML =
  '<col class="c-row">' + columns.map(c => `<col style="width:${c[2]}px">`).join("");

// Columns E and M are hidden, which doubles the divider between their neighbours.
const edge = { D: "before-hidden", L: "before-hidden", F: "after-hidden", N: "after-hidden" };
document.getElementById("letters").innerHTML =
  '<th class="corner"><svg width="12" height="10"><path d="M11 0v10H1z" fill="#d6d6d6"/></svg></th>' +
  columns.map(c => `<th scope="col" class="${edge[c[0]] || ""}">${c[0]}</th>`).join("");

document.getElementById("grid").innerHTML = rows.map((cells, i) => {
  const tall = [1, 3, 6].includes(i % 7) ? ' class="tall"' : "";
  const tds = cells.map(v => `<td${v === date ? ' class="r"' : ""}>${v}</td>`).join("");
  return `<tr${tall}><th scope="row">${i + 1}</th>${tds}</tr>`;
}).join("");
```
